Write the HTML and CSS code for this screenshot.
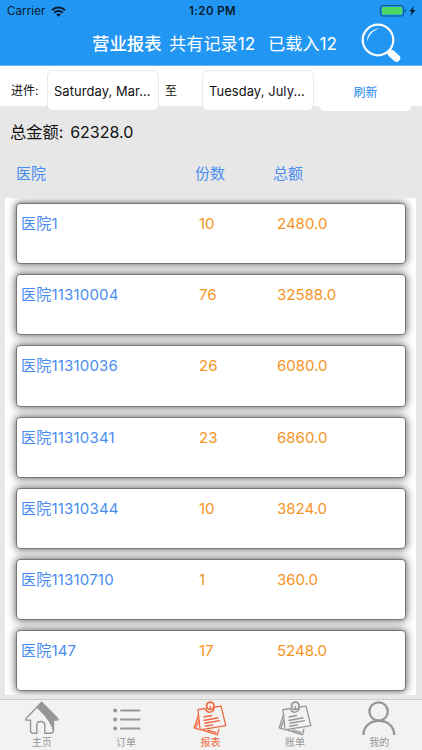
FILE: index.html
```html
<!DOCTYPE html>
<html lang="zh-CN">
  <head>
    <meta charset="UTF-8" />
    <meta name="viewport" content="width=device-width, initial-scale=1" />
    <title>营业报表</title>
    <link rel="stylesheet" href="styles.css">
  </head>
  <body>
    <header class="header">
      <div class="status-bar">
        <div class="carrier">
          <span>Carrier</span>
          <svg width="15" height="11" viewBox="0 0 15 11">
            <g fill="none" stroke="#071a2b" stroke-width="2">
              <path d="M1 4.2a9.2 9.2 0 0 1 13 0" />
              <path d="M3.3 6.7a6 6 0 0 1 8.4 0" />
            </g>
            <path d="M7.5 10.8L5.2 8.5a3.3 3.3 0 0 1 4.6 0z" fill="#071a2b" />
          </svg>
        </div>
        <span class="time">1:20 PM</span>
        <div class="battery">
          <svg width="38" height="12" viewBox="0 0 38 12">
            <rect x="0.6" y="0.6" width="23" height="10.4" rx="2.3" fill="#2196f3" stroke="#0e5289" />
            <rect x="2" y="2" width="20.2" height="7.6" rx="1" fill="#4cd964" />
            <path d="M25 4v3.6q1.2-.4 1.2-1.8T25 4z" fill="#0e5289" />
            <path d="M34 1l-4.6 5.6h2.5L30.5 11l5-6h-2.7z" fill="#071a2b" />
          </svg>
        </div>
      </div>
      <div class="title-bar">
        <h1>营业报表</h1>
        <span class="total">共有记录12</span>
        <span class="loaded">已载入12</span>
        <svg class="search" width="42" height="42" viewBox="0 0 42 42">
          <circle cx="17" cy="17" r="15.3" fill="none" stroke="#fff" stroke-width="2.2" />
          <path d="M6.3 18.5C5.5 11.5 10.5 6 18.5 5.3C12.5 7.5 8.5 11 6.3 18.5z" fill="#dff2ff" />
          <path d="M27 28l2 2" stroke="#fff" stroke-width="4" />
          <path d="M30.5 30.7l5 4.300" stroke="#fff" stroke-width="7.5" stroke-linecap="round" />
        </svg>
      </div>
    </header>

    <div class="filter">
      <label>进件:</label>
      <button class="date">Saturday, Mar...</button>
      <span class="to">至</span>
      <button class="date">Tuesday, July...</button>
      <button class="refresh">刷新</button>
    </div>

    <main class="report">
      <p class="amount">总金额: <span>62328.0</span></p>
      <div class="columns">
        <span>医院</span><span>份数</span><span>总额</span>
      </div>
      <div class="list">
        <div class="card"><span>医院1</span><span>10</span><span>2480.0</span></div>
        <div class="card"><span>医院11310004</span><span>76</span><span>32588.0</span></div>
        <div class="card"><span>医院11310036</span><span>26</span><span>6080.0</span></div>
        <div class="card"><span>医院11310341</span><span>23</span><span>6860.0</span></div>
        <div class="card"><span>医院11310344</span><span>10</span><span>3824.0</span></div>
        <div class="card"><span>医院11310710</span><span>1</span><span>360.0</span></div>
        <div class="card"><span>医院147</span><span>17</span><span>5248.0</span></div>
      </div>
    </main>

    <svg width="0" height="0" class="symbols">
      <symbol id="notes" viewBox="0 0 36 36">
        <g fill="none" stroke="currentColor" stroke-width="1.3" stroke-linejoin="round">
          <path d="M6.5 15L2.2 27.800l4.500 1.500M7 20L4 27.500" />
          <path d="M10.500 30.200l15 4.600 1.500-6M15.500 30.200l9 2.500" />
          <path d="M14 8.500L6 9.700L8 29.800L33.800 25.700L29 6.200L22 7.200" />
          <path d="M11.500 17l8.500-1.500M11.500 20.500l15-2.700M12.500 23.300l15.500-2.700M12.500 26.200l8.500-1.300" stroke-width="1.4" />
          <circle cx="18.300" cy="5.800" r="3.700" stroke-width="1.700" />
          <path d="M14 8.500c-.5 5.300 8.500 4.700 8-1" stroke-width="1.500" />
          <path d="M18.300 6v3.500" />
        </g>
      </symbol>
    </svg>

    <nav class="tabs">
      <a class="tab">
        <svg width="36" height="36" viewBox="0 0 36 36">
          <path d="M17.6 2.200L34 19.200L29.6 20.500V33.200Q28 22 13 8z" fill="currentColor" />
          <path d="M17.6 2.200L1.8 18.800q-.8 1.300 1 1.300H6.500v10.500q0 2.700 2.500 2.700h3.800V25q0-3.500 4-3.500t4 3.500v8.300h5.700q3 0 3-3V20h3.200q2.300 0 .5-2z" fill="none" stroke="currentColor" stroke-width="1.4" stroke-linejoin="round" />
        </svg>
        <span>主页</span>
      </a>
      <a class="tab">
        <svg width="36" height="36" viewBox="0 0 36 36">
          <g fill="currentColor">
            <circle cx="7.2" cy="10.5" r="1.9" />
            <circle cx="7.2" cy="19.5" r="1.9" />
            <circle cx="7.2" cy="28.5" r="1.9" />
          </g>
          <path d="M13 10.500h18.500M13 19.500h18.500M13 28.500h18.500" stroke="currentColor" stroke-width="2" stroke-linecap="round" />
        </svg>
        <span>订单</span>
      </a>
      <a class="tab active">
        <svg width="36" height="36"><use href="#notes" /></svg>
        <span>报表</span>
      </a>
      <a class="tab">
        <svg width="36" height="36"><use href="#notes" /></svg>
        <span>账单</span>
      </a>
      <a class="tab">
        <svg width="36" height="36" viewBox="0 0 36 36">
          <g fill="none" stroke="currentColor" stroke-width="2.3">
            <circle cx="17.6" cy="11.500" r="9.200" />
            <path d="M2.500 35c0-19 30.700-19 30.700 0" />
          </g>
        </svg>
        <span>我的</span>
      </a>
    </nav>
  </body>
</html>
```
FILE: styles.css
```css
* {
  box-sizing: border-box;
}
body {
  margin: 0;
  height: 750px;
  display: flex;
  flex-direction: column;
  overflow: hidden;
  background: #e7e7e7;
  font-family: Inter, "Noto Sans CJK SC", sans-serif;
  color: #111;
}
.header {
  flex: none;
  height: 66px;
  background: #2196f3;
  border-bottom: 1px solid #62b3f3;
}
.status-bar {
  height: 22px;
  display: grid;
  grid-template-columns: 1fr auto 1fr;
  align-items: center;
  padding: 0 4px 0 7px;
  color: #071a2b;
  font-size: 11.5px;
}
.carrier {
  display: flex;
  align-items: center;
  gap: 6px;
  letter-spacing: 0.1px;
}
.time {
  font-weight: 600;
  letter-spacing: 0.4px;
}
.battery {
  display: flex;
  justify-content: flex-end;
}
.title-bar {
  display: flex;
  height: 43px;
  align-items: center;
  padding-left: 92px;
  color: #fff;
  font-size: 17.2px;
  line-height: 20px;
  white-space: nowrap;
}
.title-bar h1 {
  width: 77px;
  margin: 0;
  font-size: 17.4px;
  font-weight: 500;
}
.total {
  width: 99px;
}
.loaded {
  width: 93px;
}
.search {
  flex: none;
}
.filter {
  position: relative;
  flex: none;
  height: 40px;
  display: flex;
  align-items: flex-start;
  padding: 4px 0 0 11px;
  background: #fff;
  font-size: 12px;
  line-height: 41px;
  white-space: nowrap;
}
.filter label {
  width: 36px;
}
.filter button {
  height: 41px;
  padding: 2px 0 0;
  border: 1px solid #e7e7e7;
  border-radius: 6px;
  background: #fff;
  font-family: inherit;
  font-size: 12.9px;
  color: #111;
}
.filter .date {
  width: 112px;
  padding-left: 6px;
  text-align: left;
  letter-spacing: 0.1px;
}
.to {
  width: 43px;
  padding-left: 6px;
}
.filter .refresh {
  width: 93px;
  margin-left: 5px;
  border-color: #fff;
  font-size: 12px;
  color: #2585ee;
}
.report {
  flex: 1;
  min-height: 0;
  overflow: hidden;
}
.amount {
  height: 52px;
  margin: 0;
  padding-left: 10px;
  font-size: 16.3px;
  line-height: 53px;
}
.amount span {
  margin-left: 2px;
  font-size: 16px;
}
.columns {
  display: grid;
  grid-template-columns: 179px 78px 1fr;
  height: 40px;
  padding-left: 16px;
  color: #4a8df0;
  font-size: 15px;
  line-height: 31px;
}
.list {
  display: flex;
  flex-direction: column;
  gap: 10px;
  height: 497px;
  margin: 0 6px 0 5px;
  padding: 5px 10px 0 11px;
  background: #fff;
  overflow: hidden;
}
.card {
  flex: none;
  display: grid;
  grid-template-columns: 178px 78px 1fr;
  height: 61.2px;
  padding-left: 4px;
  border: 1px solid #777;
  border-radius: 4px;
  background: #fff;
  box-shadow: 0 0 8px rgba(0, 0, 0, 0.7);
  color: #f5941f;
  font-size: 15px;
  line-height: 40px;
}
.card span:first-child {
  color: #4a8df0;
  letter-spacing: 0.2px;
}
.symbols {
  position: absolute;
}
.tabs {
  flex: none;
  display: grid;
  grid-template-columns: repeat(5, 1fr);
  height: 51px;
  border-top: 1px solid #cacaca;
  background: #f2f2f2;
}
.tab {
  display: flex;
  flex-direction: column;
  align-items: center;
  padding-right: 1px;
  color: #969696;
  font-size: 10px;
  line-height: 13px;
}
.tab.active {
  color: #f16840;
}
```
